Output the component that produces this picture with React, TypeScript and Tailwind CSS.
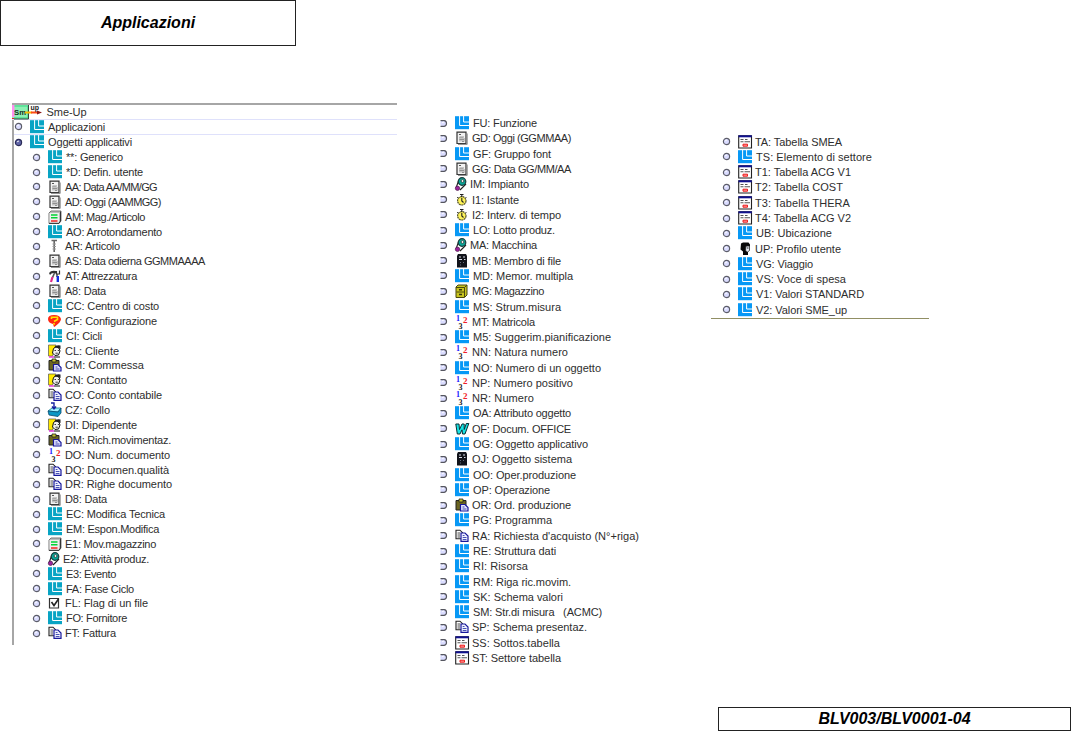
import { useLayoutEffect, useRef } from "react";

type Kind =
  | "L" | "doc" | "mag" | "screw" | "tool" | "quest" | "face" | "clip" | "copy" | "box"
  | "num" | "pump" | "check" | "clock" | "server" | "cabinet" | "word" | "table" | "user";

// kind, label, rendered width in pixels
type Row = [Kind, string, number];

const first: Row[] = [
  ["L", "**: Generico", 57], ["L", "*D: Defin. utente", 77], ["doc", "AA: Data AA/MM/GG", 92],
  ["doc", "AD: Oggi (AAMMGG)", 96], ["mag", "AM: Mag./Articolo", 80], ["L", "AO: Arrotondamento", 96],
  ["screw", "AR: Articolo", 55], ["doc", "AS: Data odierna GGMMAAAA", 140], ["tool", "AT: Attrezzatura", 72],
  ["doc", "A8: Data", 41], ["L", "CC: Centro di costo", 93], ["quest", "CF: Configurazione", 92],
  ["L", "CI: Cicli", 36], ["face", "CL: Cliente", 54], ["clip", "CM: Commessa", 79],
  ["face", "CN: Contatto", 62], ["copy", "CO: Conto contabile", 97], ["box", "CZ: Collo", 45],
  ["face", "DI: Dipendente", 72], ["clip", "DM: Rich.movimentaz.", 106], ["num", "DO: Num. documento", 105],
  ["copy", "DQ: Documen.qualità", 104], ["copy", "DR: Righe documento", 107], ["doc", "D8: Data", 42],
  ["L", "EC: Modifica Tecnica", 99], ["L", "EM: Espon.Modifica", 93], ["mag", "E1: Mov.magazzino", 91],
  ["pump", "E2: Attività produz.", 86], ["L", "E3: Evento", 50], ["L", "FA: Fase Ciclo", 68],
  ["check", "FL: Flag di un file", 83], ["L", "FO: Fornitore", 61], ["copy", "FT: Fattura", 51],
];

const second: Row[] = [
  ["L", "FU: Funzione", 64], ["doc", "GD: Oggi (GGMMAA)", 99], ["L", "GF: Gruppo font", 78],
  ["doc", "GG: Data GG/MM/AA", 99], ["pump", "IM: Impianto", 59], ["clock", "I1: Istante", 47],
  ["clock", "I2: Interv. di tempo", 89], ["L", "LO: Lotto produz.", 82], ["pump", "MA: Macchina", 67],
  ["server", "MB: Membro di file", 89], ["L", "MD: Memor. multipla", 100], ["cabinet", "MG: Magazzino", 72],
  ["L", "MS: Strum.misura", 88], ["num", "MT: Matricola", 63], ["L", "M5: Suggerim.pianificazione", 138],
  ["num", "NN: Natura numero", 96], ["L", "NO: Numero di un oggetto", 128], ["num", "NP: Numero positivo", 101],
  ["num", "NR: Numero", 62], ["L", "OA: Attributo oggetto", 98], ["word", "OF: Docum. OFFICE", 99],
  ["L", "OG: Oggetto applicativo", 115], ["server", "OJ: Oggetto sistema", 100], ["L", "OO: Oper.produzione", 103],
  ["L", "OP: Operazione", 77], ["clip", "OR: Ord. produzione", 99], ["L", "PG: Programma", 79],
  ["copy", "RA: Richiesta d'acquisto (N°+riga)", 167], ["L", "RE: Struttura dati", 83], ["L", "RI: Risorsa", 55],
  ["L", "RM: Riga ric.movim.", 98], ["L", "SK: Schema valori", 90], ["L", "SM: Str.di misura   (ACMC)", 129],
  ["copy", "SP: Schema presentaz.", 115], ["table", "SS: Sottos.tabella", 88], ["table", "ST: Settore tabella", 89],
];

const third: Row[] = [
  ["table", "TA: Tabella SMEA", 87], ["L", "TS: Elemento di settore", 116], ["table", "T1: Tabella ACG V1", 96],
  ["table", "T2: Tabella COST", 88], ["table", "T3: Tabella THERA", 95], ["table", "T4: Tabella ACG V2", 96],
  ["L", "UB: Ubicazione", 76], ["user", "UP: Profilo utente", 86], ["L", "VG: Viaggio", 57],
  ["L", "VS: Voce di spesa", 90], ["L", "V1: Valori STANDARD", 108], ["L", "V2: Valori SME_up", 91],
];

function Label({ text, width }: { text: string; width: number }) {
  const ref = useRef<HTMLSpanElement>(null);
  useLayoutEffect(() => {
    const el = ref.current;
    if (!el) return;
    el.style.letterSpacing = "0px";
    const natural = el.getBoundingClientRect().width;
    el.style.letterSpacing = `${(width - natural) / text.length}px`;
  }, [text, width]);
  return (
    <span ref={ref} className="whitespace-pre text-[11px] leading-[14px] text-[#2e2e2e]">
      {text}
    </span>
  );
}

function Glyph({ kind, color }: { kind: Kind; color: string }) {
  switch (kind) {
    case "L":
      return (
        <>
          <path d="M0 .2H14V13.2H0Z" fill={color} />
          <path d="M4.6 0V9.5H14M8.6 0V6H14" stroke="#fff" strokeWidth="1" fill="none" />
        </>
      );
    case "doc":
      return (
        <>
          <path d="M2 1.2H11V12.5H2Z" fill="#f2f2f2" stroke="#333" strokeWidth="1.2" />
          <path d="M12.2 2.5V13.4H3" stroke="#888" fill="none" />
          <path d="M4 3.5H6" stroke="#555" strokeWidth="1" />
          <path d="M4.5 6H9M5 6V10.5M7 6V10.5H9V7M4.5 8.5H9" stroke="#8a8a8a" strokeWidth=".9" fill="none" />
        </>
      );
    case "mag":
      return (
        <>
          <path d="M1 3L3 1H13V11L11 13.5H1Z" fill="#bbb" stroke="#777" />
          <path d="M1.5 3H11V13H1.5Z" fill="#eee" />
          <path d="M3 5H9.5M3 7.8H9.5" stroke="#00d435" strokeWidth="1.6" />
          <path d="M3 11H9.5" stroke="#f02020" strokeWidth="1.5" />
          <path d="M12.5 1.5V11L11 13.3H1" fill="none" stroke="#333" />
        </>
      );
    case "screw":
      return (
        <>
          <path d="M3.5 1.5H9M6.2 2V13" stroke="#666" strokeWidth="1.6" />
          <path d="M4.5 5H8M4.5 7.5H8M4.5 10H8" stroke="#999" />
        </>
      );
    case "tool":
      return (
        <>
          <path d="M1 4Q3 1 8 2V4.5Q4 3 2 6Z" fill="#333" />
          <path d="M6.5 4L4.5 8.5M9 5V8" stroke="#555" strokeWidth="1.6" />
          <path d="M8.5 2V5H11.5V1.5" fill="none" stroke="#333" strokeWidth="1.2" />
          <path d="M4.5 8L3 13" stroke="#e02a8a" strokeWidth="2.2" />
          <path d="M9.8 7V13" stroke="#102ee0" strokeWidth="2.4" />
        </>
      );
    case "quest":
      return (
        <>
          <path d="M0 5Q0 1 6 1T13 5Q13 8 7 12.5L6 13L5 10Q0 9 0 5Z" fill="#ff2812" />
          <path d="M3.5 5V3.2H9.5V5.5L6 7.5M6 9V10.8" fill="none" stroke="#ffe600" strokeWidth="1.6" />
        </>
      );
    case "face":
      return (
        <>
          <path d="M.5 1H8L4.5 12H.5Z" fill="#ffe900" stroke="#555" strokeWidth=".7" />
          <path d="M5.5 4.5L8 2.8L11 4L12 7L10.5 11L7 11.5L4.5 9Z" fill="#f1f1f1" stroke="#111" />
          <path d="M6 3.5Q8 .5 12.5 1.5L12.5 5L9 3.8Z" fill="#222" />
          <path d="M6.5 6.5H8M9.8 6.5H11M7.5 9.2H9.8" fill="none" stroke="#222" strokeWidth=".9" />
          <path d="M1 13H6" stroke="#e21bd6" strokeWidth="1.3" />
          <path d="M6 13H12" stroke="#222" strokeWidth="1.1" />
        </>
      );
    case "clip":
      return (
        <>
          <path d="M1 2.5H11V12H1Z" fill="#6b6520" stroke="#222" />
          <path d="M4 1H8V4H4Z" fill="#c5c02b" stroke="#222" strokeWidth=".8" />
          <path d="M5.5 6.5H10L13 9.5V13H5.5Z" fill="#e3e5ff" stroke="#17179b" strokeWidth="1.2" />
          <path d="M7.5 9H9.5M7.5 11H11.5" stroke="#4448b0" />
        </>
      );
    case "copy":
      return (
        <>
          <path d="M1 1.2H5L7.5 3.7V9.8H1Z" fill="#fff" stroke="#222" strokeWidth="1.1" />
          <path d="M2.5 4H5M2.5 6H5M2.5 8H5" stroke="#333" strokeWidth=".9" />
          <path d="M6 4H10L13 7V12.3H6Z" fill="#f0f1ff" stroke="#17179b" strokeWidth="1.2" />
          <path d="M7.7 6.5H9.5M7.7 8.5H11.5M7.7 10.5H11.5" stroke="#333fae" strokeWidth=".9" />
        </>
      );
    case "box":
      return (
        <>
          <path d="M0 8L4 5H13L10 9Z" fill="#9ff1ff" stroke="#10748a" strokeWidth=".8" />
          <path d="M0 8L10 9L13 5V10L10 13.5L1 12Z" fill="#0c98c4" stroke="#084a70" strokeWidth=".8" />
          <path d="M3 0H6V5M4 3.5L6 6L8 3.5" stroke="#1620a0" strokeWidth="1.4" fill="none" />
        </>
      );
    case "num":
      return (
        <g fontFamily="Liberation Serif, serif" fontWeight="700" fontSize="8">
          <text x="1" y="6" fill="#1717ff">1</text>
          <text x="8" y="7.5" fill="#f11d28" fontSize="9">2</text>
          <text x="3.5" y="13.5" fill="#222">3</text>
        </g>
      );
    case "pump":
      return (
        <>
          <path d="M3.5 4L1 11M11 7L5 13" stroke="#222" strokeWidth="1.1" />
          <circle cx="7" cy="4.5" r="3.8" fill="#08a597" stroke="#173c3c" strokeWidth="1.2" />
          <circle cx="7.5" cy="4" r="1.4" fill="#fff" stroke="#222" strokeWidth=".7" />
          <circle cx="2.5" cy="11.3" r="2.2" fill="#9b259b" stroke="#421742" strokeWidth=".6" />
        </>
      );
    case "check":
      return (
        <>
          <path d="M1.5 2.5H10.5V12H1.5Z" fill="#fff" stroke="#333" strokeWidth="1.2" />
          <path d="M3.5 6L6 9.5L10.5 3" fill="none" stroke="#222" strokeWidth="1.6" />
        </>
      );
    case "clock":
      return (
        <>
          <circle cx="6.8" cy="7.8" r="4.2" fill="#fff45a" stroke="#55532b" strokeWidth="1.2" strokeDasharray="2 .5" />
          <path d="M5 1.5H8.5M6.8 1V4M6.8 5V8L8.5 9.5" stroke="#222" strokeWidth="1.1" fill="none" />
          <path d="M2 5L3 4M10.5 4L11.5 5" stroke="#444" />
        </>
      );
    case "server":
      return (
        <>
          <path d="M3 0H11L12 2V13.5H2V2Z" fill="#11131a" />
          <path d="M4 3H6M8 3H10M4 5.5H7M9 5.5H10.5" stroke="#d7dbe5" strokeWidth="1.1" />
          <path d="M5 8.5H6M8 8.5H9M5 11H6" stroke="#697080" />
        </>
      );
    case "cabinet":
      return (
        <>
          <path d="M1 3L3 1H12V11L9.5 13.5H1Z" fill="#c9c51e" stroke="#49470d" />
          <path d="M1 3.5H9.5V13M9.5 3.5L12 1M1.5 8H9" fill="none" stroke="#49470d" />
          <path d="M4 5.8H7M4 10.5H7" stroke="#343309" strokeWidth="1.4" />
        </>
      );
    case "word":
      return (
        <path d="M.8 2H4L4.5 7.5L7 2H9.2L9.2 7.5L11.3 1.5H13.8L10 12H7.5L7 7.8L5 12H2.3Z" fill="#16e5e6" stroke="#082e33" strokeWidth="1" />
      );
    case "table":
      return (
        <>
          <path d="M.7 .7H13.5V13H.7Z" fill="#fff" stroke="#222" strokeWidth="1.1" />
          <path d="M.5 1.3H13.8" stroke="#11118f" strokeWidth="2" />
          <path d="M2.5 4.5H5.5M7 4.5H9.5M2.5 6.8H5.5M6.5 6.8H12" stroke="#555" strokeWidth="1.1" />
          <path d="M5 9.2H9.5V11.2H5Z" fill="#ff9b9b" stroke="#ed1b1b" />
        </>
      );
    case "user":
      return (
        <>
          <path d="M3 1.5L5 .5H10.5L12 2.5V4H8V9L10 10V13H5V9.5L2.5 7.5Z" fill="#080808" />
          <path d="M8 4H11.5V8.5L9.5 10L7.5 8.5Z" fill="#e9edf5" stroke="#222" strokeWidth=".8" />
          <path d="M9 6H10.5" stroke="#222" />
        </>
      );
  }
}

function Icon({ kind, color }: { kind: Kind; color: string }) {
  return (
    <svg className="h-[14px] w-[15px] shrink-0 overflow-visible" viewBox="0 0 15 14">
      <Glyph kind={kind} color={color} />
    </svg>
  );
}

function Bullet({ variant = "ring" }: { variant?: "ring" | "right" | "full" }) {
  return (
    <svg className="h-[9px] w-[9px] shrink-0" viewBox="0 0 9 9">
      <circle cx="4.5" cy="4.5" r="3.2" fill={variant === "full" ? "#6266a8" : "#dadcff"} />
      {variant === "right" ? (
        <path d="M1.5 1.7H5.2Q7.5 2 7.5 4.5T5.2 7.4H1.5" fill="none" stroke="#55565f" strokeWidth="1.2" />
      ) : (
        <circle cx="4.5" cy="4.5" r="3.1" fill="none" stroke={variant === "full" ? "#2b2c58" : "#5c5d69"} strokeWidth="1.2" />
      )}
      <path d="M3 3.8L5 3" stroke="#fff" strokeWidth=".9" />
    </svg>
  );
}

function TreeRow({ row, color, variant, className }: {
  row: Row; color: string; variant?: "ring" | "right" | "full"; className: string;
}) {
  const [kind, text, width] = row;
  const gap = kind === "L" ? "ml-[3px]" : kind === "pump" ? "ml-0" : "ml-[2px]";
  return (
    <li className={`flex items-center ${className}`}>
      <Bullet variant={variant} />
      <span className="w-[7px] shrink-0" />
      <Icon kind={kind} color={color} />
      <span className={`flex ${gap}`}><Label text={text} width={width} /></span>
    </li>
  );
}

function Logo() {
  return (
    <svg className="h-[15px] w-[31px] shrink-0" viewBox="0 0 31 15">
      <path d="M0 0H17V14H0Z" fill="#8ef0b4" />
      <path d="M0 0H2.5V12H0Z" fill="#ff8ff1" />
      <path d="M2.5 1H16V13H2" fill="none" stroke="#30d781" />
      <path d="M16.5 0V14H2" stroke="#34453b" fill="none" />
      <text x="2" y="9.5" textLength="12" lengthAdjust="spacingAndGlyphs" fontFamily="Liberation Sans, sans-serif" fontWeight="700" fontSize="7.5" fill="#152d20">Sm</text>
      <path d="M13 7.5H20" stroke="#f8b900" strokeWidth="2" />
      <path d="M19 7.5H26" stroke="#ff4a16" strokeWidth="2" />
      <path d="M25 5.5L30 7.5L25 9.5Z" fill="#8c1616" />
      <text x="18.5" y="4.5" fontFamily="Liberation Sans, sans-serif" fontWeight="700" fontSize="7" fill="#222">up</text>
      <path d="M0 13.5H2" stroke="#ed1b1b" />
    </svg>
  );
}

export default function App() {
  return (
    <main className="flex h-[731px] w-[1071px] flex-col overflow-hidden bg-white font-['Liberation_Sans',sans-serif] text-black">
      <header className="h-[46px] w-[296px] shrink-0 border border-[#222] pt-[10px] text-center">
        <h1 className="text-[16px] leading-[24px] font-bold italic">Applicazioni</h1>
      </header>

      <div className="flex h-[661px] shrink-0 items-start pl-[12px]">
        <section className="mt-[57px] h-[542px] w-[385px] shrink-0 border-t-2 border-l-2 border-[#a6a6a6]">
          <div className="-ml-[2px] flex h-[15px] items-center border-b border-[#dfe1fb]">
            <Logo />
            <span className="ml-[3.5px] flex"><Label text="Sme-Up" width={40} /></span>
          </div>
          <ul>
            <TreeRow row={["L", "Applicazioni", 57]} color="#08a4c4" className="h-[14.89px] border-b border-[#dfe1fb]" />
            <TreeRow row={["L", "Oggetti applicativi", 84]} color="#08a4c4" variant="full" className="h-[14.89px]" />
            {first.map((row) => (
              <TreeRow key={row[1]} row={row} color="#08a4c4" className="h-[14.89px] pl-[18px]" />
            ))}
          </ul>
        </section>

        <ul className="mt-[69.5px] ml-[42px] w-[272px] shrink-0">
          {second.map((row) => (
            <TreeRow key={row[1]} row={row} color="#0798f5" variant="right" className="h-[15.29px]" />
          ))}
        </ul>

        <ul className="mt-[88px] h-[185px] w-[218px] shrink-0 border-b border-[#918f64] pl-[11px]">
          {third.map((row) => (
            <TreeRow key={row[1]} row={row} color="#0798f5" className="h-[15.29px]" />
          ))}
        </ul>
      </div>

      <footer className="ml-[718px] h-[24px] w-[353px] shrink-0 border border-[#222] text-center text-[16px] leading-[21px] font-bold italic">
        BLV003/BLV0001-04
      </footer>
    </main>
  );
}
